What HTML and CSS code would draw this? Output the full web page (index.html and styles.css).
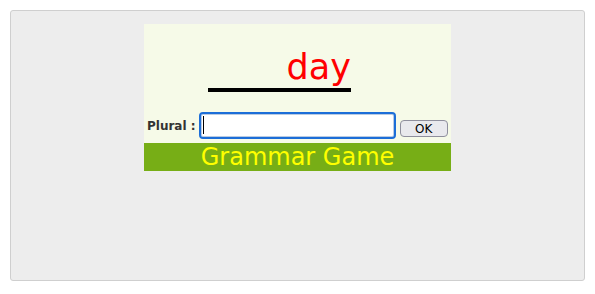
FILE: index.html
```html
<!DOCTYPE html>
<html lang="en">
<head>
	<meta charset="UTF-8">
	<title>Grammar Game</title>
	<link rel="stylesheet" href="styles.css">
</head>
<body>
	<div class="frame">
		<div class="panel">
			<div class="word">day</div>
			<div class="answer">
				<label for="plural">Plural :</label>
				<span class="field">
					<input type="text" id="plural" autofocus>
					<span class="caret"></span>
				</span>
				<button type="button">OK</button>
			</div>
			<div class="title">Grammar Game</div>
		</div>
	</div>
</body>
</html>
```

FILE: styles.css
```css
*{
	margin:0;
	padding:0;
	box-sizing:border-box;
}
body{
	font-family:"DejaVu Sans", Verdana, sans-serif;
	padding:10px;
}
.frame{
	height:271px;
	border:1px solid #cfcfcf;
	border-radius:3px;
	background:#ededed;
	padding-top:13px;
}
.panel{
	width:307px;
	margin:0 auto;
	background:#f6fae8;
}
.word{
	width:143px;
	margin-left:64px;
	padding-top:22px;
	text-align:right;
	font-size:35px;
	line-height:42px;
	color:#ff0000;
	border-bottom:4px solid #000;
}
.answer{
	display:flex;
	align-items:flex-end;
	padding:20px 3px 4px;
}
.answer label{
	font-size:12px;
	font-weight:bold;
	line-height:15px;
	color:#333;
	margin-bottom:5px;
	margin-right:3px;
	white-space:nowrap;
}
.field{
	position:relative;
	display:block;
	height:27px;
}
.field input{
	display:block;
	width:197px;
	height:27px;
	border:2px solid #1c6ed8;
	border-radius:4px;
	box-shadow:0 0 0 1px #b9cbe2 inset;
	padding:0 2px;
	font-family:inherit;
	font-size:15px;
	outline:none;
	background:#fff;
	caret-color:transparent;
}
.caret{
	position:absolute;
	left:4px;
	top:4px;
	width:1.5px;
	height:18px;
	background:#000;
}
.answer button{
	width:50px;
	height:17px;
	margin-left:4px;
	margin-bottom:2px;
	border:1px solid #8f8f9d;
	border-radius:4px;
	background:#e9e9ed;
	font-family:inherit;
	font-size:12px;
	color:#000;
}
.title{
	height:28px;
	line-height:28px;
	background:#77ae16;
	color:#ffff00;
	font-size:24px;
	text-align:center;
}
```
